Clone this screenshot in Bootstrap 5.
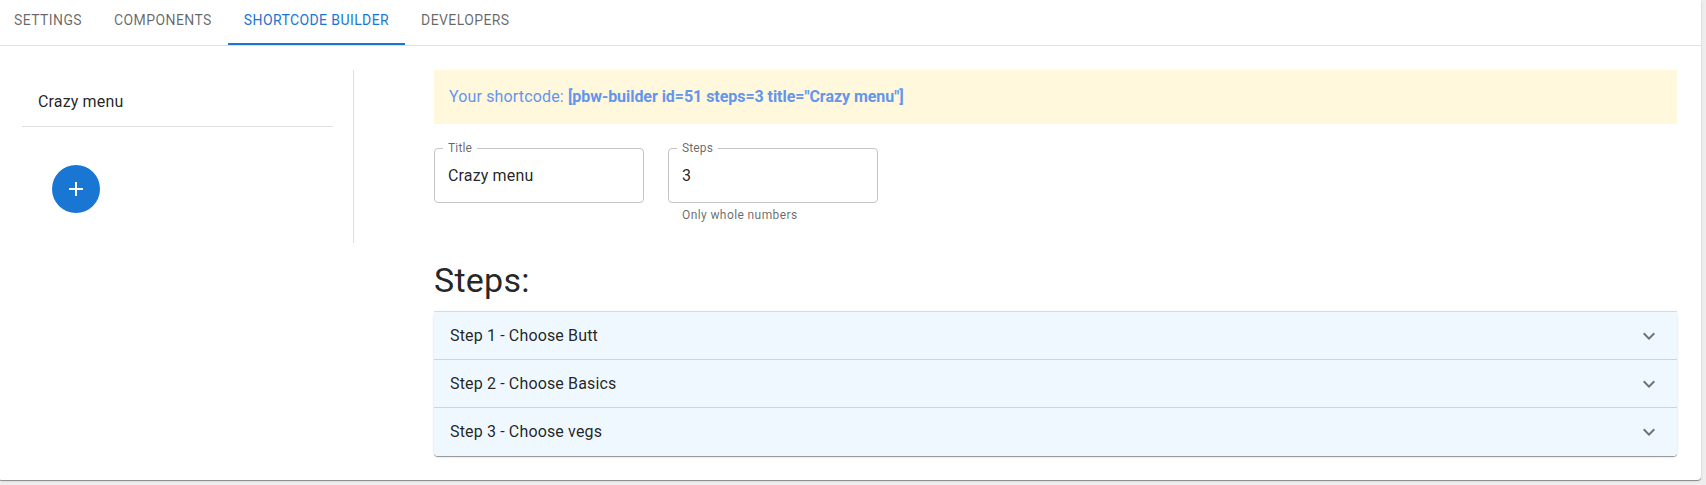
<!DOCTYPE html>
<html lang="en">
<head>
<meta charset="utf-8">
<meta name="viewport" content="width=device-width, initial-scale=1">
<title>Shortcode builder</title>
<link href="https://cdn.jsdelivr.net/npm/bootstrap@5.3.0/dist/css/bootstrap.min.css" rel="stylesheet">
<style>
body{background:#eee;font-family:Roboto,"Liberation Sans",sans-serif;font-size:16px;line-height:24px;letter-spacing:.15px;color:rgba(0,0,0,.87)}
.panel{width:1701px;height:480px;background:#fff;border-radius:0 0 4px 1px;box-shadow:0 1px 0 rgba(0,0,0,.25),0 1px 1px rgba(0,0,0,.14),0 1px 3px rgba(0,0,0,.12)}
.tabbar{height:46px;border-bottom:1px solid #e0e0e0;margin:0}
.tabbar .nav-link{height:45px;padding:8px 16px 0;font-size:14px;line-height:24px;letter-spacing:.4px;color:rgba(0,0,0,.6);border-radius:0;text-transform:uppercase;white-space:nowrap}
.tabbar .nav-item:first-child .nav-link{padding-left:14px}
.tabbar .nav-link.active{color:#1976d2;box-shadow:inset 0 -2px #1976d2}
.side{width:354px;height:173px;border-right:1px solid #dedede;padding:0 20px 0 22px}
.menu-entry{height:57px;padding:20px 16px 0;border-bottom:1px solid #e0e0e0}
.fab{width:48px;height:48px;margin:38px 0 0 30px;background:#1976d2}
.main{margin-left:80px;width:1243px}
.notice{height:54px;padding:15px;background:#fff8dc;color:#6495ed}
.notice strong{letter-spacing:-.05px}
.field{width:210px}
.outline{height:55px;border:1px solid #c4c4c4;border-radius:4px;padding:15px 13px}
.outline .caption{position:absolute;left:8px;top:-13px;padding:0 5px;background:#fff;font-size:12px;color:rgba(0,0,0,.6)}
.hint{font-size:12px;line-height:20px;letter-spacing:.4px;color:rgba(0,0,0,.6);margin:2px 14px 0}
.title{font-size:34px;line-height:42px;font-weight:400;letter-spacing:.25px;margin:34px 0 10px}
.steps{border-radius:4px;box-shadow:0 1px 0 rgba(0,0,0,.25),0 1px 1px rgba(0,0,0,.14),0 1px 3px rgba(0,0,0,.12)}
.step{height:48px;padding:0 16px;background:#f0f8ff;border-top:1px solid #ccd5dd}
.step:first-child{border-top-color:#d7dce0}
.step:last-child{border-radius:0 0 4px 4px;height:49px}
.step svg{fill:rgba(0,0,0,.54)}
</style>
<script src="https://cdn.jsdelivr.net/npm/bootstrap@5.3.0/dist/js/bootstrap.bundle.min.js"></script>
</head>
<body class="min-vh-100">
<div class="panel">
  <ul class="nav tabbar flex-nowrap">
    <li class="nav-item"><a class="nav-link" href="#">Settings</a></li>
    <li class="nav-item"><a class="nav-link" href="#">Components</a></li>
    <li class="nav-item"><a class="nav-link active" href="#">Shortcode Builder</a></li>
    <li class="nav-item"><a class="nav-link" href="#">Developers</a></li>
  </ul>
  <div class="d-flex align-items-start pt-4">
    <aside class="side">
      <div class="menu-entry">Crazy menu</div>
      <button class="fab btn rounded-circle border-0 p-0 d-flex align-items-center justify-content-center" aria-label="Add">
        <svg width="24" height="24" viewBox="0 0 24 24" fill="#fff"><path d="M19 13h-6v6h-2v-6H5v-2h6V5h2v6h6v2z"/></svg>
      </button>
    </aside>
    <main class="main">
      <div class="notice">Your shortcode: <strong>[pbw-builder id=51 steps=3 title="Crazy menu"]</strong></div>
      <div class="d-flex gap-4 pt-4">
        <div class="field">
          <div class="outline position-relative"><span class="caption">Title</span>Crazy menu</div>
        </div>
        <div class="field">
          <div class="outline position-relative"><span class="caption">Steps</span>3</div>
          <p class="hint">Only whole numbers</p>
        </div>
      </div>
      <h4 class="title">Steps:</h4>
      <div class="steps">
        <div class="step d-flex align-items-center justify-content-between">Step 1 - Choose Butt<svg width="24" height="24" viewBox="0 0 24 24"><path d="M16.59 8.59 12 13.17 7.41 8.59 6 10l6 6 6-6z"/></svg></div>
        <div class="step d-flex align-items-center justify-content-between">Step 2 - Choose Basics<svg width="24" height="24" viewBox="0 0 24 24"><path d="M16.59 8.59 12 13.17 7.41 8.59 6 10l6 6 6-6z"/></svg></div>
        <div class="step d-flex align-items-center justify-content-between">Step 3 - Choose vegs<svg width="24" height="24" viewBox="0 0 24 24"><path d="M16.59 8.59 12 13.17 7.41 8.59 6 10l6 6 6-6z"/></svg></div>
      </div>
    </main>
  </div>
</div>
</body>
</html>
